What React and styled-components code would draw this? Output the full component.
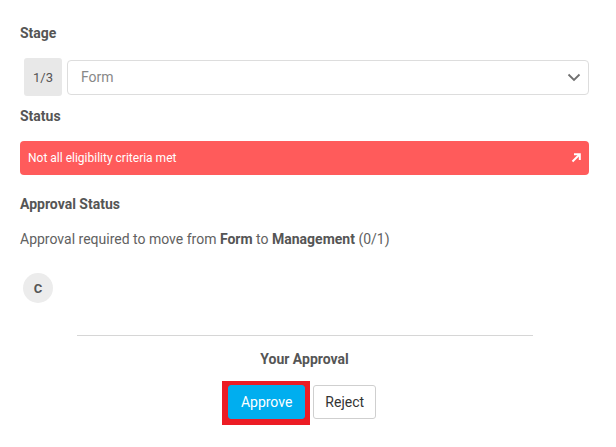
import React from "react";
import styled, { createGlobalStyle } from "styled-components";

const Global = createGlobalStyle`
  html, body { margin: 0; padding: 0; background: #fff; }
  body { font-family: Roboto, "Liberation Sans", Arial, sans-serif; color: #616161; }
`;

const Page = styled.div`
  display: flex;
  flex-direction: column;
  padding: 25px 27px 0 20px;
  width: 616px;
  box-sizing: border-box;
`;

const Label = styled.div`
  font-size: 14px;
  line-height: 16px;
  font-weight: 700;
  color: #555;
  margin-top: ${(p) => p.$mt || 0}px;
  text-align: ${(p) => (p.$center ? "center" : "left")};
`;

const StageRow = styled.div`
  display: flex;
  align-items: center;
  gap: 5px;
  margin-top: 17px;
  padding-left: 4px;
`;

const Badge = styled.div`
  width: 38px;
  height: 38px;
  border-radius: 3px;
  background: #e8e8e8;
  display: flex;
  align-items: center;
  justify-content: center;
  font-size: 13px;
  color: #555;
`;

const Select = styled.div`
  flex: 1;
  height: 35px;
  box-sizing: border-box;
  border: 1px solid #ddd;
  border-radius: 4px;
  display: flex;
  align-items: center;
  justify-content: space-between;
  padding: 0 7px 0 13px;
  font-size: 14px;
  color: #888;
`;

const AlertBar = styled.div`
  margin-top: 17px;
  height: 34px;
  border-radius: 4px;
  background: #ff5b5b;
  color: #fff;
  font-size: 12px;
  display: flex;
  align-items: center;
  justify-content: space-between;
  padding: 0 8px 0 8px;
`;

const Body = styled.div`
  margin-top: 17px;
  font-size: 14px;
  line-height: 20px;
  color: #616161;
  b { color: #555; font-weight: 700; }
`;

const Avatar = styled.div`
  margin-top: 24px;
  margin-left: 3px;
  width: 30px;
  height: 30px;
  border-radius: 50%;
  background: #ececec;
  color: #555;
  font-weight: 700;
  font-size: 13px;
  display: flex;
  align-items: center;
  justify-content: center;
`;

const Divider = styled.hr`
  margin: 32px auto 0;
  width: 456px;
  border: none;
  border-top: 1px solid #d6d6d6;
  height: 0;
`;

const Buttons = styled.div`
  display: flex;
  justify-content: center;
  align-items: flex-start;
  gap: 3px;
  margin-top: 14px;
  padding-right: 11px;
`;

const FocusRing = styled.div`
  display: flex;
  background: #ec1c24;
  padding: 4px 5px 6px 6px;
`;

const Btn = styled.button`
  font-family: inherit;
  font-size: 14px;
  height: 34px;
  border-radius: 3px;
  padding: 0 ${(p) => (p.$primary ? 12 : 11)}px;
  margin-top: ${(p) => (p.$primary ? 0 : 4)}px;
  border: 1px solid ${(p) => (p.$primary ? "#00aeef" : "#cfcfcf")};
  background: ${(p) => (p.$primary ? "#00aeef" : "#fff")};
  color: ${(p) => (p.$primary ? "#fff" : "#333")};
  outline: none;
  cursor: pointer;
`;

export default function App() {
  return (
    <>
      <Global />
      <Page>
        <Label>Stage</Label>
        <StageRow>
          <Badge>1/3</Badge>
          <Select>
            <span>Form</span>
            <svg width="14" height="9" viewBox="0 0 14 9">
              <path d="M1.5 1.5 L7 7 L12.5 1.5" fill="none" stroke="#707070" strokeWidth="1.8" />
            </svg>
          </Select>
        </StageRow>
        <Label $mt={12}>Status</Label>
        <AlertBar>
          <span>Not all eligibility criteria met</span>
          <svg width="10" height="10" viewBox="0 0 10 10">
            <path d="M1.5 8.5 L8 2" stroke="#fff" strokeWidth="2" fill="none" />
            <path d="M3 1.2 H8.8 V7" stroke="#fff" strokeWidth="2" fill="none" />
          </svg>
        </AlertBar>
        <Label $mt={21}>Approval Status</Label>
        <Body>
          Approval required to move from <b>Form</b> to <b>Management</b> (0/1)
        </Body>
        <Avatar>C</Avatar>
        <Divider />
        <Label $mt={15} $center>Your Approval</Label>
        <Buttons>
          <FocusRing>
            <Btn $primary>Approve</Btn>
          </FocusRing>
          <Btn>Reject</Btn>
        </Buttons>
      </Page>
    </>
  );
}
